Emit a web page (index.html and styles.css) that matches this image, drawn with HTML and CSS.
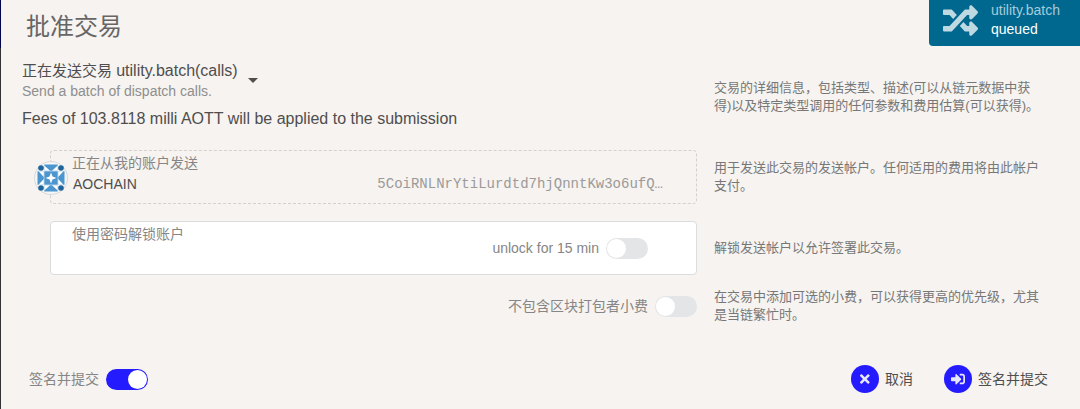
FILE: index.html
```html
<!DOCTYPE html>
<html lang="zh-CN">
<head>
<meta charset="utf-8">
<meta name="viewport" content="width=device-width, initial-scale=1">
<title>批准交易</title>
<link rel="stylesheet" href="styles.css">
</head>
<body>
<main class="modal">
  <h1 class="title">批准交易</h1>
  <form class="rows">
    <section class="row">
      <div class="call">
        <button type="button" class="expander" aria-expanded="false">
          <span class="call-text">
            <span class="call-name">正在发送交易 <span class="method">utility.batch(calls)</span></span>
            <span class="call-meta">Send a batch of dispatch calls.</span>
          </span>
          <span class="caret"></span>
        </button>
        <p class="fees">Fees of 103.8118 milli AOTT will be applied to the submission</p>
      </div>
      <p class="hint">交易的详细信息，包括类型、描述(可以从链元数据中获得)以及特定类型调用的任何参数和费用估算(可以获得)。</p>
    </section>
    <section class="row">
      <div class="box account">
        <svg class="identicon" viewBox="0 0 34 34" aria-hidden="true">
          <circle cx="17" cy="17" r="16.5" fill="#f5f6f7" stroke="#d8d8d8"/>
          <g fill="#4b96cf">
            <path d="M10.300 3.500h13.400v6.300H10.300zM10.300 24.200h13.400v6.300H10.300zM3.500 10.300h6.300v13.400H3.500zM24.200 10.300h6.300v13.400h-6.300z"/>
            <path d="M10.300 10.300h13.400v13.400H10.300z"/>
          </g>
          <g fill="#fff">
            <path d="M10.300 4.500v5.300h5.700zM23.700 4.500v5.300H18zM10.300 29.500v-5.300h5.700zM23.700 29.500v-5.300H18z"/>
            <path d="M4.500 10.300h5.300V16zM4.500 23.700h5.300V18zM29.500 10.300h-5.300V16zM29.500 23.700h-5.300V18z"/>
            <path d="M17 11.500l1.500 4 4 1.500-4 1.500-1.500 4-1.500-4-4-1.500 4-1.500z"/>
          </g>
          <g fill="#1f659b">
            <circle cx="7" cy="7" r="2.800"/><circle cx="27" cy="7" r="2.800"/>
            <circle cx="7" cy="27" r="2.800"/><circle cx="27" cy="27" r="2.800"/>
          </g>
        </svg>
        <span class="label">正在从我的账户发送</span>
        <div class="account-line">
          <span class="account-name">AOCHAIN</span>
          <span class="address">5CoiRNLNrYtiLurdtd7hjQnntKw3o6ufQ…</span>
        </div>
      </div>
      <p class="hint">用于发送此交易的发送帐户。任何适用的费用将由此帐户支付。</p>
    </section>
    <section class="row">
      <div class="box unlock">
        <div class="field">
          <label class="label" for="password">使用密码解锁账户</label>
          <input class="password" id="password" type="password">
        </div>
        <label class="toggle">unlock for 15 min <input class="switch" type="checkbox"></label>
      </div>
      <p class="hint">解锁发送帐户以允许签署此交易。</p>
    </section>
    <section class="row row-tip">
      <label class="toggle toggle-end">不包含区块打包者小费 <input class="switch" type="checkbox"></label>
      <p class="hint">在交易中添加可选的小费，可以获得更高的优先级，尤其是当链繁忙时。</p>
    </section>
  </form>
  <footer class="actions">
    <label class="toggle">签名并提交 <input class="switch" type="checkbox" checked></label>
    <div class="buttons">
      <button type="button" class="action">
        <span class="disc"><svg class="icon" viewBox="0 0 352 512" aria-hidden="true"><path d="M242.720 256l100.070-100.070c12.280-12.280 12.280-32.190 0-44.480l-22.240-22.240c-12.280-12.280-32.190-12.280-44.480 0L176 189.280 75.930 89.210c-12.280-12.280-32.190-12.280-44.480 0L9.210 111.450c-12.280 12.280-12.280 32.190 0 44.480L109.280 256 9.210 356.070c-12.280 12.280-12.280 32.190 0 44.480l22.240 22.240c12.280 12.280 32.200 12.280 44.480 0L176 322.720l100.070 100.070c12.280 12.280 32.200 12.280 44.480 0l22.240-22.240c12.280-12.280 12.280-32.190 0-44.480L242.720 256z"/></svg></span>取消
      </button>
      <button type="button" class="action">
        <span class="disc"><svg class="icon" viewBox="0 0 512 512" aria-hidden="true"><path d="M416 448h-84c-6.600 0-12-5.400-12-12v-40c0-6.600 5.400-12 12-12h84c17.700 0 32-14.300 32-32V160c0-17.700-14.300-32-32-32h-84c-6.600 0-12-5.400-12-12V76c0-6.600 5.400-12 12-12h84c53 0 96 43 96 96v192c0 53-43 96-96 96zm-47-201L201 79c-15-15-41-4.500-41 17v96H24c-13.300 0-24 10.700-24 24v96c0 13.300 10.700 24 24 24h136v96c0 21.500 26 32 41 17l168-168c9.300-9.400 9.300-24.600 0-34z"/></svg></span>签名并提交
      </button>
    </div>
  </footer>
</main>
<aside class="status" role="status">
  <svg class="status-icon" viewBox="0 0 512 512" aria-hidden="true"><path d="M504.971 359.029c9.373 9.373 9.373 24.569 0 33.941l-80 79.984c-15.010 15.010-40.971 4.490-40.971-16.971V416h-58.785a12.004 12.004 0 0 1-8.773-3.812l-70.556-75.596 53.333-57.143L352 336h32v-39.981c0-21.438 25.943-31.998 40.971-16.971l80 79.981zM12 176h84l52.781 56.551 53.333-57.143-70.556-75.596A11.999 11.999 0 0 0 122.785 96H12c-6.627 0-12 5.373-12 12v56c0 6.627 5.373 12 12 12zm372 0v39.984c0 21.460 25.961 31.980 40.971 16.971l80-79.984c9.373-9.373 9.373-24.569 0-33.941l-80-79.981C409.943 24.021 384 34.582 384 56.019V96h-58.785a12.004 12.004 0 0 0-8.773 3.812L96 336H12c-6.627 0-12 5.373-12 12v56c0 6.627 5.373 12 12 12h110.785c3.326 0 6.503-1.381 8.773-3.812L352 176h32z"/></svg>
  <div>
    <div class="status-call">utility.batch</div>
    <div class="status-state">queued</div>
  </div>
</aside>
</body>
</html>
```

FILE: styles.css
```css
*, *::before, *::after {
  box-sizing: border-box;
}

body {
  margin: 0;
  min-height: 100vh;
  padding-left: 1px;
  background: linear-gradient(#05054a 48px, #333336 48px);
  color: #4e4e4e;
  font: 14px/20px "Liberation Sans", "Noto Sans CJK SC", sans-serif;
}

p, h1 {
  margin: 0;
}

button {
  padding: 0;
  border: 0;
  background: none;
  color: inherit;
  font: inherit;
  cursor: pointer;
}

.modal {
  min-height: 100vh;
  padding: 11px 0 15px;
  background: #f6f3f0;
}

.title {
  padding-left: 25px;
  color: #666;
  font-size: 24px;
  font-weight: 400;
  line-height: 32px;
}

.rows {
  display: flex;
  flex-direction: column;
  gap: 17px;
  padding: 17px 39px 0 21px;
}

.row {
  display: grid;
  grid-template-columns: minmax(0, 1fr) 327px;
  column-gap: 17px;
  align-items: center;
}

.row-tip {
  margin-top: -4px;
}

.hint {
  color: #777;
  font-size: 13px;
  line-height: 18px;
}

.expander {
  display: flex;
  align-items: center;
  gap: 10px;
  text-align: left;
}

.call-text {
  display: flex;
  flex-direction: column;
}

.call-name {
  font-size: 15px;
  line-height: 22px;
}

.method,
.fees {
  font-size: 16px;
  line-height: 22px;
}

.call-meta {
  color: #8e8e8e;
  line-height: 18px;
}

.caret {
  border: 5px solid transparent;
  border-top-color: #4e4e4e;
  border-bottom: 0;
}

.fees {
  padding: 8px 0 3px;
}

.box {
  position: relative;
  min-height: 54px;
  margin-left: 28px;
  padding: 2px 33px 2px 21px;
  border: 1px solid #dcdcdc;
  border-radius: 4px;
}

.label {
  display: block;
  color: #868686;
}

.account {
  border: 1px dashed #d3d0ce;
}

.identicon {
  position: absolute;
  top: 10px;
  left: -17px;
  width: 34px;
  height: 34px;
}

.account-line {
  display: flex;
  justify-content: space-between;
  gap: 16px;
  padding: 1px 0 0 1px;
}

.address {
  overflow: hidden;
  color: #9b9a99;
  font-family: "Liberation Mono", monospace;
  text-overflow: ellipsis;
  white-space: nowrap;
}

.unlock {
  display: flex;
  align-items: center;
  padding-right: 48px;
  background: #fff;
}

.field {
  flex: 1;
  min-width: 0;
}

.password {
  display: block;
  width: 100%;
  height: 28px;
  padding: 0;
  border: 0;
  outline: 0;
  background: transparent;
  font: inherit;
}

.toggle {
  display: flex;
  align-items: center;
  gap: 7px;
  color: #868686;
}

.toggle-end {
  justify-content: flex-end;
}

.switch {
  display: flex;
  width: 42px;
  height: 21px;
  margin: 0;
  padding: 1px;
  border-radius: 11px;
  background: #e3e5e7;
  appearance: none;
  cursor: pointer;
}

.switch::before {
  width: 19px;
  height: 19px;
  border-radius: 50%;
  background: #fff;
  content: "";
}

.switch:checked {
  justify-content: flex-end;
  background: #241cff;
}

.actions {
  display: flex;
  align-items: center;
  justify-content: space-between;
  padding: 41px 32px 0 28px;
}

.buttons {
  display: flex;
  gap: 31px;
}

.action {
  display: flex;
  align-items: center;
  gap: 6px;
}

.disc {
  display: flex;
  align-items: center;
  justify-content: center;
  width: 28px;
  height: 28px;
  border-radius: 50%;
  background: #241cff;
}

.icon {
  height: 14px;
  fill: #e8e6fb;
}

.status {
  position: absolute;
  top: 0;
  right: 0;
  display: flex;
  align-items: center;
  gap: 13px;
  padding: 1px 20px 7px 14px;
  border-bottom-left-radius: 4px;
  background: #00688f;
  color: #fff;
  line-height: 19px;
}

.status-icon {
  width: 35px;
  height: 35px;
  fill: #bfd9e3;
}

.status-call {
  color: #a6cbd9;
}
```
